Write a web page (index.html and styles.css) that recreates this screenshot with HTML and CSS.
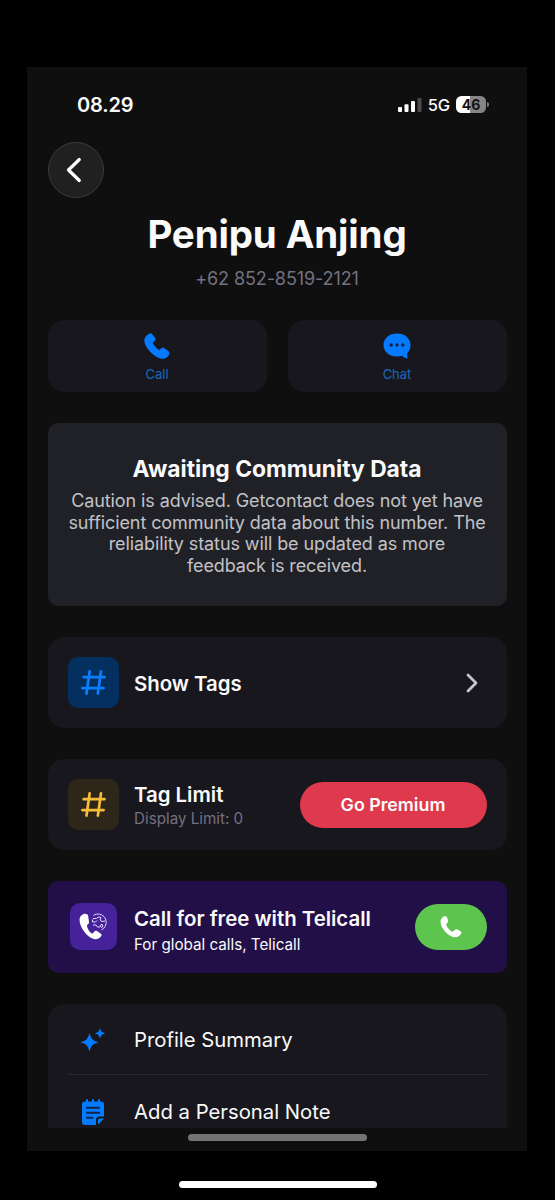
FILE: index.html
```html
<!DOCTYPE html>
<html lang="en">
<head>
<meta charset="utf-8">
<title>Caller profile</title>
<link rel="stylesheet" href="styles.css">
</head>
<body>
<svg class="defs" width="0" height="0" aria-hidden="true">
  <symbol id="phone" viewBox="0 0 28 28">
    <path d="M6 .7C3.300 2.200.7 4.300.9 8.200c.3 6 7.700 14 14 17.100 5.400 2.600 9.100 1.500 11.600-2.800.8-1.400.4-2.900-.8-3.900l-4-2.900c-1-.8-2.200-.7-3.200.1l-2 1.800c-2.600-1.200-6-4.900-6.900-7.500l2.200-2.200c.9-.9 1-2.100.3-3.100L9.300 1.500C8.500.3 7.200 0 6 .7Z"/>
  </symbol>
  <symbol id="handset" viewBox="0 0 22 22">
    <path d="M3.700.6C1.800 1.700.4 3.700.5 6.300c.4 6.300 7.700 14.200 14 15 2.600.3 5.500-1.200 6.700-3.700.5-1.100 0-1.800-1-2.500l-2.800-1.600c-1-.5-1.800-.4-2.500.3l-1.500 1.500c-.7.7-1.600.4-2.500-.3-2.200-1.700-4.100-4-4.600-6.200-.2-.9.200-1.300.9-1.800.8-.6 1.100-1.400.8-2.500l-.9-3C6.600.2 5.300-.3 3.700.6Z"/>
  </symbol>
  <symbol id="hash" viewBox="0 0 24 24">
    <path d="M8.300 1.300 5.300 22.600M19.200 1.300l-3 21.300M2.600 6.900h20M1.300 17.300h20.400" fill="none" stroke="currentColor" stroke-width="2.600" stroke-linecap="round"/>
  </symbol>
</svg>
<main class="screen">
  <header class="status">
    <span class="time">08.29</span>
    <div class="status-right">
      <svg class="signal" width="24" height="16" viewBox="0 0 24 16"><rect x="0" y="10" width="4" height="5" rx="1"/><rect x="6.500" y="7.300" width="4" height="7.700" rx="1"/><rect x="13" y="4" width="4" height="11" rx="1"/><rect x="19.500" y="1" width="4" height="14" rx="1" opacity=".25"/></svg>
      <span class="network">5G</span>
      <span class="battery">46</span><span class="battery-tip"></span>
    </div>
  </header>
  <button class="back" aria-label="Back"><svg width="16" height="26" viewBox="0 0 16 26"><path d="M13.300 2.500 2.500 13l10.800 10.500"/></svg></button>
  <section class="identity">
    <h1>Penipu Anjing</h1>
    <p>+62 852-8519-2121</p>
  </section>
  <nav class="actions">
    <button class="action"><svg width="28" height="27"><use href="#phone"/></svg><span>Call</span></button>
    <button class="action"><svg width="28" height="27" viewBox="0 0 28 27"><path d="M14 .5C6.300.5.500 5.300.500 12S6.300 23.500 14 23.500c1.900 0 3.600-.2 5.200-.8 1.500 1.700 3.400 2.700 5.500 2.900-.4-1.700-.7-3.400-.5-5.300 2.200-2.100 3.300-4.900 3.300-8.300C27.500 5.300 21.700.5 14 .5Z"/><g class="dots"><circle cx="8.200" cy="12" r="1.700"/><circle cx="14" cy="12" r="1.700"/><circle cx="19.800" cy="12" r="1.700"/></g></svg><span>Chat</span></button>
  </nav>
  <section class="notice">
    <h2>Awaiting Community Data</h2>
    <p>Caution is advised. Getcontact does not yet have<br>sufficient community data about this number. The<br>reliability status will be updated as more<br>feedback is received.</p>
  </section>
  <section class="card">
    <span class="tile blue"><svg width="25" height="25"><use href="#hash"/></svg></span>
    <h3 class="show">Show Tags</h3>
    <svg class="chevron" width="12" height="20" viewBox="0 0 12 20"><path d="m2 2 8 8-8 8"/></svg>
  </section>
  <section class="card">
    <span class="tile gold"><svg width="25" height="25"><use href="#hash"/></svg></span>
    <div class="copy"><h3 class="limit">Tag Limit</h3><p class="sub">Display Limit: 0</p></div>
    <button class="premium">Go Premium</button>
  </section>
  <section class="card telicall">
    <span class="tile violet">
      <svg width="28" height="27" viewBox="0 0 28 27"><path fill="#fff" d="M4.500 1C2.500 2 .5 3.800.5 6.500.5 14 7.500 24 15 26c3 .7 5.800-.6 7.300-3 .6-1 .2-1.800-.7-2.500l-3.600-2.400c-1-.6-1.900-.5-2.600.3l-1.300 1.600c-.7.8-1.500.5-2.300-.3-2.100-2-3.400-4.500-3.800-6.800-.1-.8.200-1.300.9-1.700.9-.5 1.300-1.200 1.100-2.200L9.200 3C8.800 1 6.500.1 4.500 1Z"/><path class="globe" d="M14.500 2.500C18-.2 24 1 26.300 5.500c2 4.500.2 9.500-4 11.500M14 5.500h3.500l1.500-1.500 3 .5-1 2.500 2 1.500 3-.5M13.500 6.500v2.500h3l1.500-1.500M14 12h3l1.500 2h2.500l1-2.500 2 .5-1.500 3"/></svg>
    </span>
    <div class="copy"><h3 class="free">Call for free with Telicall</h3><p class="global">For global calls, Telicall</p></div>
    <button class="dial" aria-label="Call"><svg width="22" height="22"><use href="#handset"/></svg></button>
  </section>
  <section class="list">
    <div class="row">
      <span class="icon"><svg width="26" height="24" viewBox="0 0 26 24"><path d="M9.500 5c1.800 6.300 3 7.500 9.300 9.300-6.300 1.700-7.500 2.900-9.300 9.400C7.700 17.200 6.500 16 .2 14.300 6.500 12.500 7.700 11.300 9.500 5ZM20 0c1.100 3.800 1.700 4.200 5.500 5.300-3.800 1.100-4.400 1.700-5.500 5.500-1.100-3.800-1.700-4.400-5.500-5.500C18.300 4.200 18.900 3.800 20 0Z"/></svg></span>
      <span class="profile">Profile Summary</span>
    </div>
    <div class="row">
      <span class="icon"><svg width="22" height="26" viewBox="0 0 22 26"><path d="M3 2.500h1V1q0-1 1-1t1 1v1.500h4V1q0-1 1-1t1 1v1.500h4V1q0-1 1-1t1 1v1.500h1Q22 2.500 22 5.500V17.500h-4.500q-3.500 0-3.500 3.500v5H3q-3 0-3-3V5.500q0-3 3-3ZM16 25.500V21q0-1.500 1.500-1.500H22Z"/><path class="lines" d="M5 8.800h12M5 13.700h12M5 18.800h5.500"/></svg></span>
      <span class="note">Add a Personal Note</span>
    </div>
  </section>
  <div class="inner-bar"></div>
</main>
<div class="home-bar"></div>
</body>
</html>
```
FILE: styles.css
```css
* { box-sizing: border-box; }
body {
  margin: 0;
  height: 1200px;
  padding-top: 67px;
  overflow: hidden;
  background: #000;
  color: #fafafa;
  font-family: Inter, "Liberation Sans", sans-serif;
}
h1, h2, h3, p { margin: 0; }
h1, h2, h3, p, span { white-space: nowrap; }
button { border: 0; padding: 0; font: inherit; color: inherit; }
.defs { display: block; }
.screen {
  width: 500px;
  height: 1084px;
  margin-left: 27px;
  padding: 0 20.500px;
  background: #0f0f0f;
  display: flex;
  flex-direction: column;
}
.status {
  height: 75px;
  padding: 0 17.500px 0 29.500px;
  display: flex;
  align-items: center;
  justify-content: space-between;
}
.time { font-size: 20px; font-weight: 600; letter-spacing: -.15px; }
.status-right { display: flex; align-items: center; }
.signal { fill: #fff; }
.network { margin: 0 6px; font-size: 16.500px; font-weight: 500; letter-spacing: -.2px; }
.battery {
  width: 30px;
  height: 17px;
  border-radius: 5.500px;
  background: linear-gradient(90deg, #fff 46%, #858585 46%);
  color: #111;
  font-size: 14px;
  font-weight: 700;
  line-height: 17px;
  text-align: center;
}
.battery-tip { width: 2px; height: 5px; margin-left: 1px; border-radius: 0 2px 2px 0; background: #777; }
.back {
  width: 56px;
  height: 56px;
  border: 1px solid #3b3b3b;
  border-radius: 50%;
  background: #202020;
  display: flex;
  align-items: center;
  justify-content: center;
  padding-right: 4px;
}
.back path { fill: none; stroke: #fff; stroke-width: 3.200; stroke-linecap: round; stroke-linejoin: round; }
.identity { height: 122px; padding-top: 12px; text-align: center; }
h1 { font-size: 38.500px; line-height: 48px; font-weight: 700; letter-spacing: -.15px; }
.identity p { margin-top: 10px; color: #747180; font-size: 18px; line-height: 22px; letter-spacing: -.1px; }
.actions { display: grid; grid-template-columns: 219px 219px; justify-content: space-between; }
.action {
  height: 72px;
  padding-top: 13px;
  border-radius: 16px;
  background: #18171e;
  color: #1769c0;
  display: flex;
  flex-direction: column;
  align-items: center;
  gap: 6px;
  font-size: 13px;
  line-height: 16px;
}
.action svg { fill: #047bff; }
.dots { fill: #10234a; }
.notice {
  height: 183px;
  margin-top: 31px;
  padding-top: 32px;
  border-radius: 10px;
  background: #202127;
  text-align: center;
}
.notice h2 { font-size: 22.800px; line-height: 28px; font-weight: 700; }
.notice p { margin-top: 7px; color: #c2c2c6; font-size: 18px; line-height: 21.600px; letter-spacing: -.1px; }
.card {
  height: 91px;
  margin-top: 31px;
  padding: 0 20px;
  border-radius: 16px;
  background: #18171e;
  display: flex;
  align-items: center;
}
.tile {
  width: 51px;
  height: 51px;
  margin-right: 15.500px;
  border-radius: 10px;
  display: flex;
  align-items: center;
  justify-content: center;
}
.blue { background: #03305f; color: #0b7dff; }
.gold { background: #2d2619; color: #f8bd36; }
.violet { width: 47px; height: 47px; margin: 0 17.500px 2px 2px; background: #46229a; }
.globe { fill: none; stroke: #e3d8ff; stroke-width: 1; stroke-linejoin: round; }
h3 { font-size: 20.400px; line-height: 25px; font-weight: 600; }
.show { padding-top: 2px; }
.chevron { margin: 0 8.500px 0 auto; fill: none; stroke: #c4c4c9; stroke-width: 2.800; stroke-linecap: round; stroke-linejoin: round; }
.limit { padding-top: 3px; }
.sub { color: #747180; font-size: 15.200px; line-height: 23px; }
.premium, .dial { height: 46px; margin-left: auto; border-radius: 23px; }
.premium { width: 187px; background: #df394d; font-size: 17.800px; font-weight: 600; }
.telicall { height: 92px; margin-top: 31px; border-radius: 10px; background: #220f48; }
.free { padding-top: 8px; }
.global { padding-top: 2px; font-size: 15.200px; line-height: 24px; }
.dial {
  width: 72px;
  background: #5dc44d;
  fill: #fff;
  display: flex;
  align-items: center;
  justify-content: center;
}
.list {
  height: 124px;
  margin-top: 31px;
  padding: 0 20px;
  overflow: hidden;
  border-radius: 16px 16px 0 0;
  background: #18171e;
  font-size: 20.300px;
}
.row { height: 70px; padding-top: 1px; display: flex; align-items: center; }
.row + .row { border-top: 1px solid #2b2a31; height: 73px; }
.icon { width: 50px; margin-right: 16.500px; display: flex; justify-content: center; }
.icon svg { fill: #047bff; }
.lines { fill: none; stroke: #10234a; stroke-width: 2; stroke-linecap: round; }
.inner-bar { width: 179px; height: 7px; margin: 6px auto 0; border-radius: 4px; background: #747474; }
.home-bar { width: 198px; height: 7px; margin: 30px auto 0; border-radius: 4px; background: #fff; }
```
